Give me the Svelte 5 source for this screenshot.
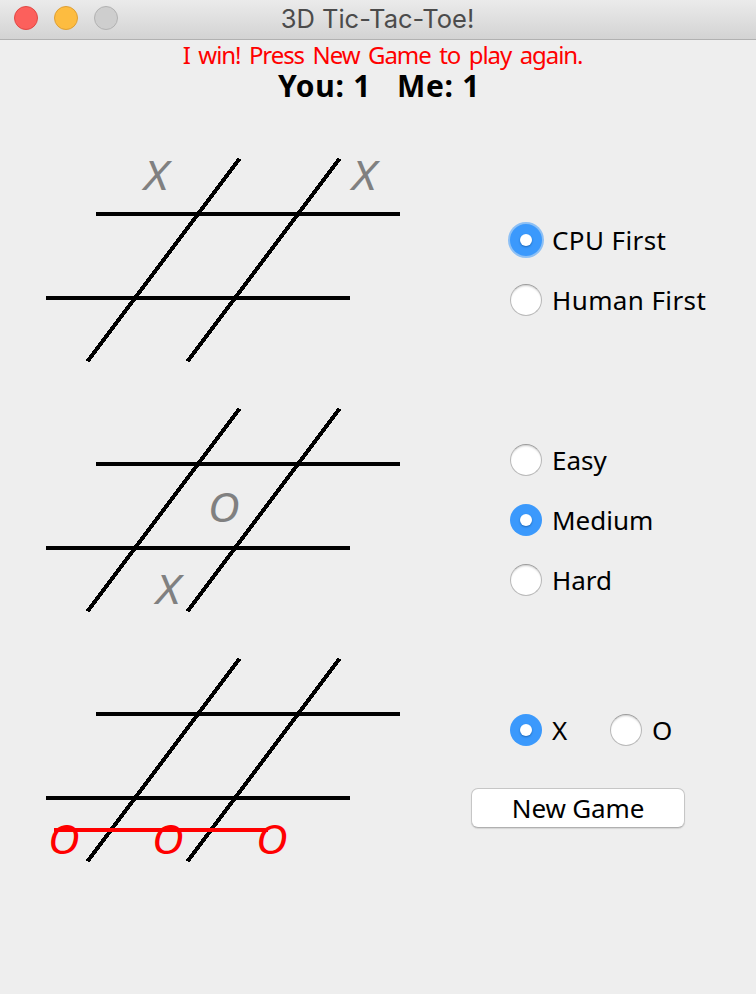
<script>
  const lights = ['close', 'minimize', 'zoom'];

  const boards = [
    { marks: [{ ch: 'X', x: 144, y: 60 }, { ch: 'X', x: 352, y: 60 }] },
    { marks: [{ ch: 'O', x: 208, y: 142 }, { ch: 'X', x: 156, y: 224 }] },
    {
      win: true,
      marks: [{ ch: 'O', x: 48, y: 224 }, { ch: 'O', x: 152, y: 224 }, { ch: 'O', x: 256, y: 224 }]
    }
  ];

  let first = $state('CPU First');
  let level = $state('Medium');
  let piece = $state('X');
</script>

{#snippet radio(label, checked, pick, focused = false)}
  <button class="radio" role="radio" aria-checked={checked} onclick={pick}>
    <span class="dot" class:checked class:focused={checked && focused}></span>
    <span class="label">{label}</span>
  </button>
{/snippet}

<div class="window">
  <header class="titlebar">
    <div class="lights">
      {#each lights as light}<span class="light {light}"></span>{/each}
    </div>
    <h1>3D Tic-Tac-Toe!</h1>
  </header>

  <div class="status">
    <p class="message">I win! Press New Game to play again.</p>
    <p class="score"><span>You: 1</span><span>Me: 1</span></p>
  </div>

  <main>
    <div class="boards">
      {#each boards as board}
        <svg width="440" height="250" viewBox="0 0 440 250">
          <g class="grid">
            <path d="M96 84H400M46 168H350" />
            <path d="M239.500 28.700L87.500 231.300M339.500 28.700L187.500 231.300" />
          </g>
          <g class="marks" class:win={board.win}>
            {#each board.marks as mark}
              <text transform="translate({mark.x} {mark.y}) scale({mark.ch === 'X' ? 1.14 : 1.08} 1)">{mark.ch}</text>
            {/each}
            {#if board.win}<path d="M54 200H268" />{/if}
          </g>
        </svg>
      {/each}
    </div>

    <div class="controls">
      <div class="group first" role="radiogroup" aria-label="First move">
        {#each ['CPU First', 'Human First'] as o}
          {@render radio(o, first === o, () => (first = o), true)}
        {/each}
      </div>
      <div class="group levels" role="radiogroup" aria-label="Difficulty">
        {#each ['Easy', 'Medium', 'Hard'] as o}
          {@render radio(o, level === o, () => (level = o))}
        {/each}
      </div>
      <div class="group pieces" role="radiogroup" aria-label="Piece">
        {#each ['X', 'O'] as o}
          {@render radio(o, piece === o, () => (piece = o))}
        {/each}
      </div>
      <button class="new-game"><span>New Game</span></button>
    </div>
  </main>
</div>

<style>
  :global(body) {
    margin: 0;
    background: #eee;
  }
  .window {
    width: 756px;
    height: 994px;
    overflow: hidden;
    background: #eee;
    color: #000;
    font-family: 'Noto Sans', 'Open Sans', sans-serif;
  }
  .titlebar {
    position: relative;
    box-sizing: border-box;
    height: 40px;
    background: linear-gradient(#ebebeb, #d3d3d3);
    border-bottom: 1px solid #b1b1b1;
    display: flex;
    align-items: center;
    justify-content: center;
  }
  .lights {
    position: absolute;
    left: 14px;
    top: 6px;
    display: flex;
    gap: 16px;
  }
  .light {
    box-sizing: border-box;
    width: 24px;
    height: 24px;
    border-radius: 50%;
    border: 1px solid;
  }
  .close { background: #fc605c; border-color: #e14844; }
  .minimize { background: #fdbc40; border-color: #de9f34; }
  .zoom { background: #cecece; border-color: #b2b2b2; }
  h1 {
    margin: 0;
    padding: 0 1px 2px 0;
    font: 400 25.5px/36px Inter, sans-serif;
    color: #4b4b4b;
    white-space: nowrap;
  }
  .status {
    height: 80px;
    display: flex;
    flex-direction: column;
    align-items: center;
    white-space: nowrap;
  }
  p { margin: 0; }
  .message {
    font-size: 24px;
    line-height: 30px;
    padding-left: 9px;
    color: #f00;
    letter-spacing: -1.1px;
    word-spacing: 3.5px;
  }
  .score {
    display: flex;
    gap: 26px;
    padding-left: 2px;
    font-size: 30px;
    line-height: 32px;
    font-weight: 700;
    letter-spacing: 0.7px;
  }
  main { display: flex; }
  .boards {
    width: 440px;
    padding-top: 10px;
    display: flex;
    flex-direction: column;
  }
  svg { display: block; }
  path {
    fill: none;
    stroke: #000;
    stroke-width: 4;
    shape-rendering: crispEdges;
  }
  text {
    font-size: 40.5px;
    font-style: italic;
    fill: #808080;
  }
  .win text { fill: #f00; }
  .win path { stroke: #f00; }
  .controls {
    padding: 100px 0 0 70px;
    display: flex;
    flex-direction: column;
    align-items: flex-start;
  }
  .group {
    display: flex;
    flex-direction: column;
    gap: 20px;
  }
  .first { letter-spacing: 0.4px; }
  .levels { margin-top: 120px; }
  .pieces {
    flex-direction: row;
    gap: 0;
    margin-top: 110px;
  }
  .pieces .radio { width: 100px; }
  button {
    font: inherit;
    color: inherit;
    letter-spacing: inherit;
    padding: 0;
    border: 0;
    background: none;
  }
  .radio {
    height: 40px;
    display: flex;
    align-items: center;
    gap: 10px;
    white-space: nowrap;
    font-size: 26px;
    line-height: 40px;
  }
  .dot {
    box-sizing: border-box;
    flex: none;
    width: 32px;
    height: 32px;
    border-radius: 50%;
    display: grid;
    place-items: center;
    background: #fff;
    border: 1px solid #b9b9b9;
    border-top-color: #9c9c9c;
    box-shadow: inset 0 2px 2px -1px #ccc;
  }
  .dot.checked {
    border: 0;
    background: #3b99fc;
    box-shadow: none;
  }
  .dot.checked::after {
    content: '';
    width: 12px;
    height: 12px;
    border-radius: 50%;
    background: #fff;
    box-shadow: 0 1px 2px #1c68b8;
  }
  .dot.focused { box-shadow: 0 0 0 2px #8dc0f5; }
  .new-game {
    width: 214px;
    height: 40px;
    margin: 38px 0 0 -39px;
    border: 1px solid #c6c6c6;
    border-bottom-color: #b0b0b0;
    border-radius: 7px;
    background: #fff;
    box-shadow: 0 1px 1px #d4d4d4;
    font-size: 26px;
    line-height: 38px;
    letter-spacing: -0.15px;
  }
</style>
